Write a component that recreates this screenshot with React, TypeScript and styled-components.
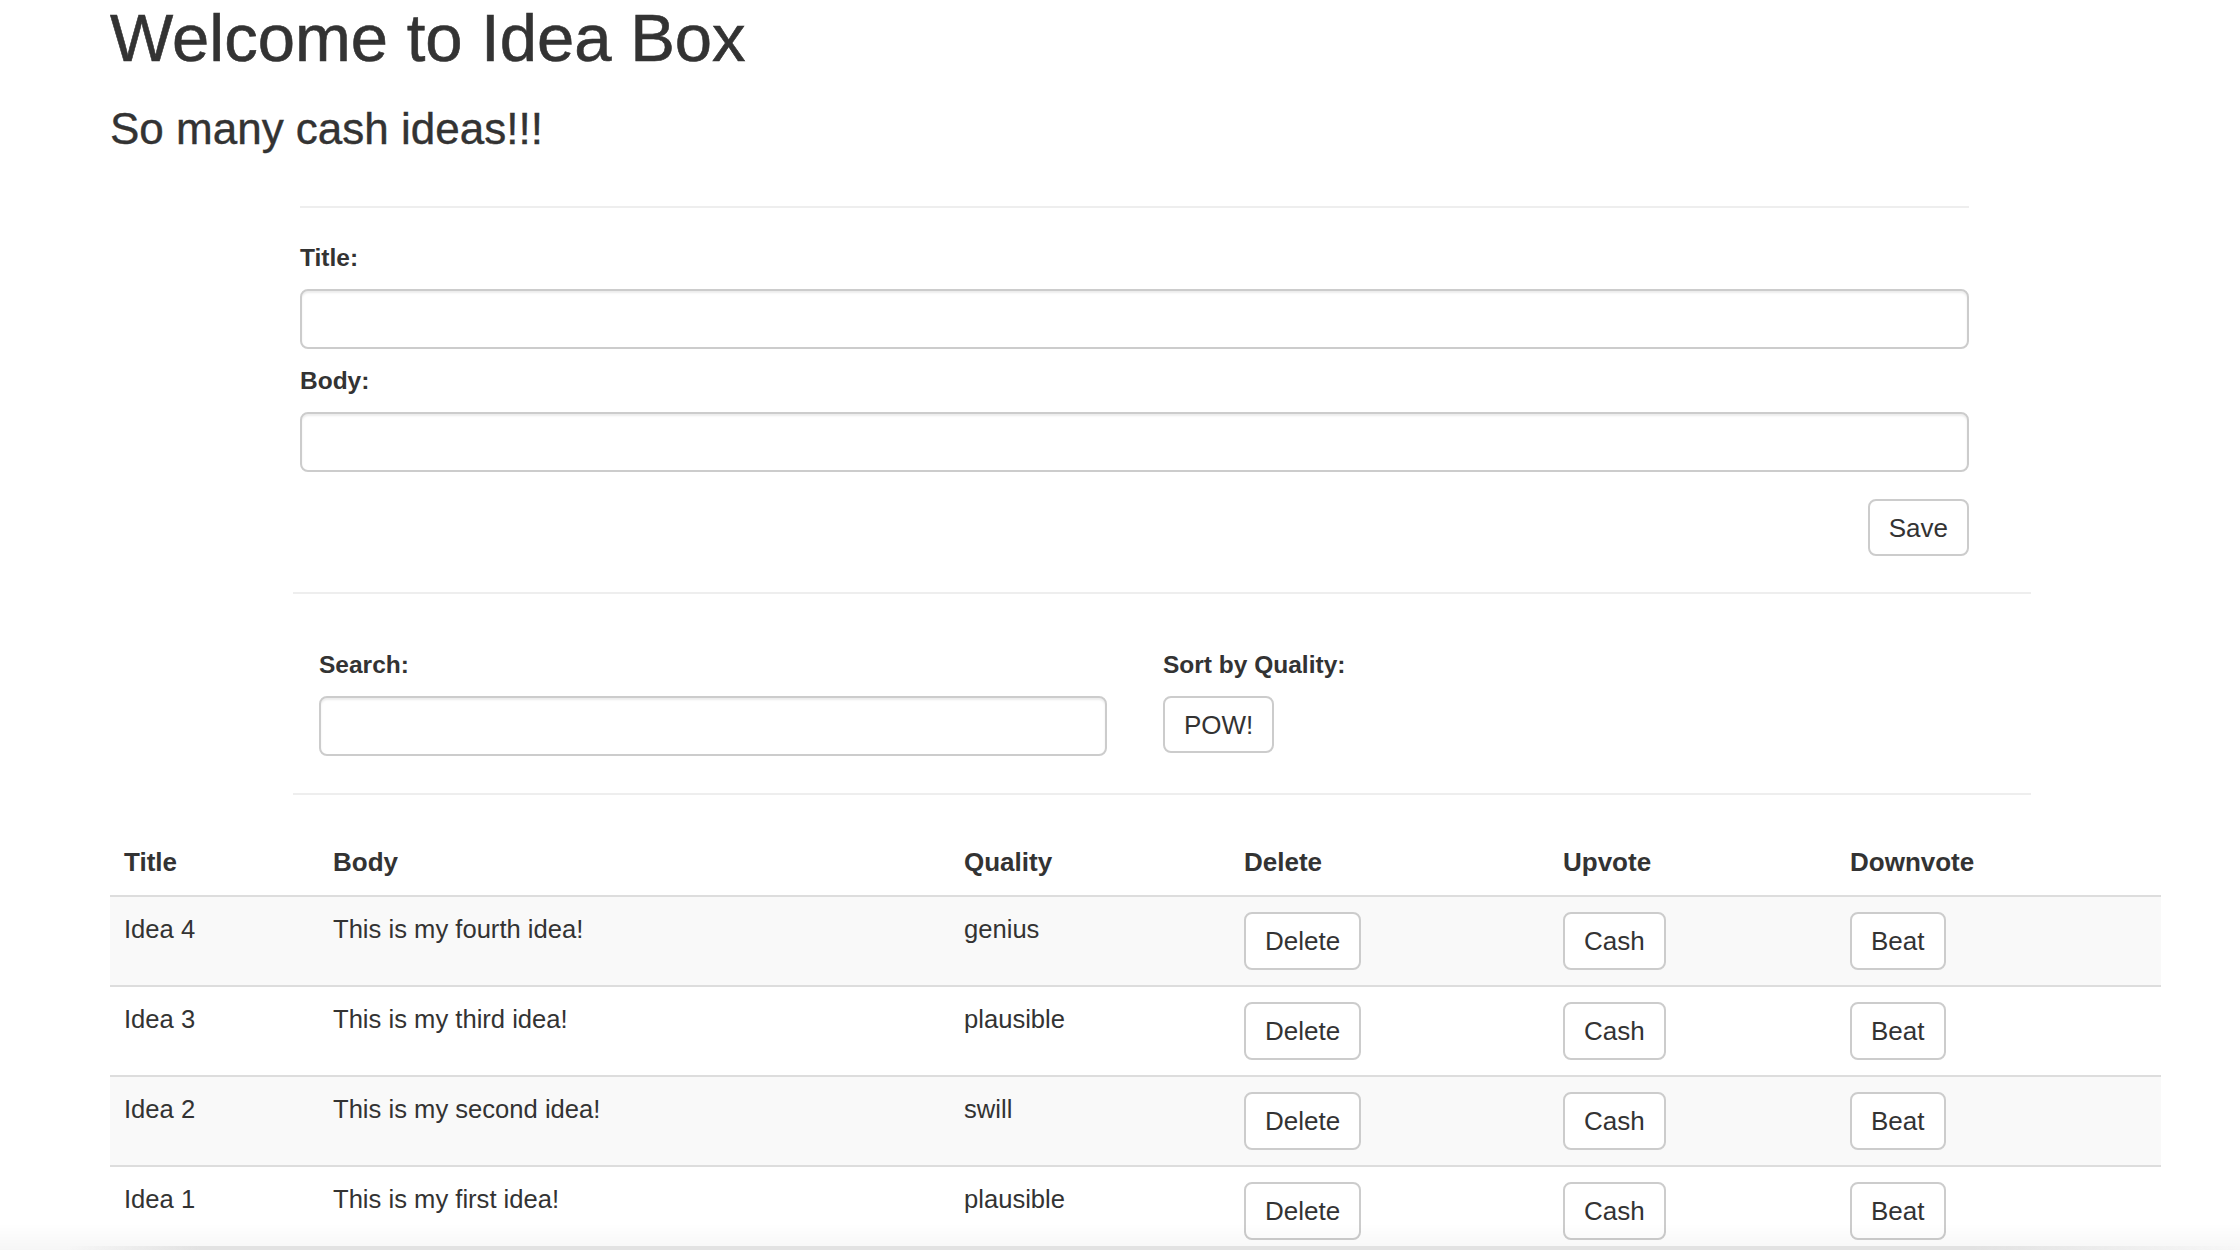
import React from "react";
import styled, { createGlobalStyle } from "styled-components";

const GlobalStyle = createGlobalStyle`
  html, body {
    margin: 0;
    padding: 0;
    background: #ffffff;
    color: #333333;
    font-family: "Liberation Sans", Arial, Helvetica, sans-serif;
    font-size: 26px;
    line-height: 37px;
  }
  * { box-sizing: border-box; }
`;

const Page = styled.div`
  margin-left: 110px;
  width: 2051px;
  padding-top: 1px;
`;

const Heading = styled.h1`
  margin: 0;
  font-size: 67px;
  line-height: 74px;
  font-weight: 500;
  color: #333;
  -webkit-text-stroke: 0.6px #333;
`;

const SubHeading = styled.h3`
  margin: 30px 0 0 0;
  font-size: 44px;
  line-height: 48px;
  font-weight: 500;
  color: #333;
  -webkit-text-stroke: 0.4px #333;
`;

const Divider = styled.hr<{ $top: number }>`
  margin: ${(p) => p.$top}px 0 0 0;
  border: 0;
  border-top: 2px solid #eeeeee;
  height: 0;
`;

const FormSection = styled.section`
  margin-left: 190px;
  width: 1669px;
  display: flex;
  flex-direction: column;
`;

const Label = styled.label<{ $top: number }>`
  display: block;
  margin-top: ${(p) => p.$top}px;
  font-weight: 700;
  font-size: 24.5px;
  line-height: 37px;
`;

const TextInput = styled.input<{ $width?: number }>`
  display: block;
  margin-top: 13px;
  width: ${(p) => (p.$width ? `${p.$width}px` : "100%")};
  height: 60px;
  border: 2px solid #cccccc;
  border-radius: 8px;
  background: #fff;
  box-shadow: inset 0 2px 2px rgba(0, 0, 0, 0.075);
  font-family: inherit;
  font-size: 26px;
  padding: 0 22px;
  outline: none;
`;

const SaveRow = styled.div`
  display: flex;
  justify-content: flex-end;
  margin-top: 27px;
`;

const Button = styled.button<{ $height?: number }>`
  height: ${(p) => p.$height ?? 58}px;
  padding: 0 19px;
  border: 2px solid #cccccc;
  border-radius: 8px;
  background: #ffffff;
  color: #333333;
  font-family: "Liberation Sans", Arial, Helvetica, sans-serif;
  font-size: 26px;
  line-height: 1;
  cursor: pointer;
  white-space: nowrap;
`;

const SearchSection = styled.section`
  margin-left: 183px;
  width: 1738px;
`;

const SearchRow = styled.div`
  display: flex;
  padding-left: 26px;
  gap: 56px;
`;

const FieldGroup = styled.div<{ $width?: number }>`
  display: flex;
  flex-direction: column;
  align-items: flex-start;
  width: ${(p) => (p.$width ? `${p.$width}px` : "auto")};
`;

const SortButtonWrap = styled.div`
  margin-top: 13px;
`;

const Table = styled.table`
  margin-top: 35px;
  width: 2051px;
  table-layout: fixed;
  border-collapse: separate;
  border-spacing: 0;
`;

const HeadCell = styled.th`
  text-align: left;
  vertical-align: bottom;
  font-weight: 700;
  padding: 14px 14px;
  border-bottom: 2px solid #dddddd;
  line-height: 37px;
`;

const BodyRow = styled.tr<{ $striped: boolean }>`
  background: ${(p) => (p.$striped ? "#f9f9f9" : "#ffffff")};
  &:not(:first-child) > td {
    border-top: 2px solid #dddddd;
  }
`;

const Cell = styled.td`
  vertical-align: top;
  padding: 15px 14px;
  line-height: 35px;
  font-size: 25.6px;
`;

const BottomShade = styled.div`
  position: fixed;
  left: 0;
  right: 0;
  bottom: 0;
  height: 26px;
  pointer-events: none;
  background: linear-gradient(to bottom, rgba(0, 0, 0, 0), rgba(0, 0, 0, 0.035));
  &::after {
    content: "";
    position: absolute;
    left: 0;
    right: 0;
    bottom: 0;
    height: 4px;
    background: linear-gradient(
      to right,
      rgba(225, 225, 225, 0) 3%,
      #e2e2e2 9%,
      #e2e2e2 88%,
      rgba(225, 225, 225, 0) 100%
    );
  }
`;

const columns = [209, 631, 280, 319, 287, 325];
const headers = ["Title", "Body", "Quality", "Delete", "Upvote", "Downvote"];

const ideas = [
  { title: "Idea 4", body: "This is my fourth idea!", quality: "genius" },
  { title: "Idea 3", body: "This is my third idea!", quality: "plausible" },
  { title: "Idea 2", body: "This is my second idea!", quality: "swill" },
  { title: "Idea 1", body: "This is my first idea!", quality: "plausible" },
];

export default function App() {
  return (
    <>
      <GlobalStyle />
      <Page>
        <Heading>Welcome to Idea Box</Heading>
        <SubHeading>So many cash ideas!!!</SubHeading>

        <FormSection>
          <Divider $top={53} />
          <Label $top={31}>Title:</Label>
          <TextInput type="text" />
          <Label $top={13}>Body:</Label>
          <TextInput type="text" />
          <SaveRow>
            <Button $height={57}>Save</Button>
          </SaveRow>
        </FormSection>

        <SearchSection>
          <Divider $top={36} />
          <SearchRow>
            <FieldGroup $width={788}>
              <Label $top={52}>Search:</Label>
              <TextInput type="text" />
            </FieldGroup>
            <FieldGroup>
              <Label $top={52}>Sort by Quality:</Label>
              <SortButtonWrap>
                <Button $height={57}>POW!</Button>
              </SortButtonWrap>
            </FieldGroup>
          </SearchRow>
          <Divider $top={37} />
        </SearchSection>

        <Table>
          <colgroup>
            {columns.map((w, i) => (
              <col key={i} style={{ width: w }} />
            ))}
          </colgroup>
          <thead>
            <tr>
              {headers.map((h) => (
                <HeadCell key={h}>{h}</HeadCell>
              ))}
            </tr>
          </thead>
          <tbody>
            {ideas.map((idea, i) => (
              <BodyRow key={idea.title} $striped={i % 2 === 0}>
                <Cell>{idea.title}</Cell>
                <Cell>{idea.body}</Cell>
                <Cell>{idea.quality}</Cell>
                <Cell>
                  <Button>Delete</Button>
                </Cell>
                <Cell>
                  <Button>Cash</Button>
                </Cell>
                <Cell>
                  <Button>Beat</Button>
                </Cell>
              </BodyRow>
            ))}
          </tbody>
        </Table>
      </Page>
      <BottomShade />
    </>
  );
}
